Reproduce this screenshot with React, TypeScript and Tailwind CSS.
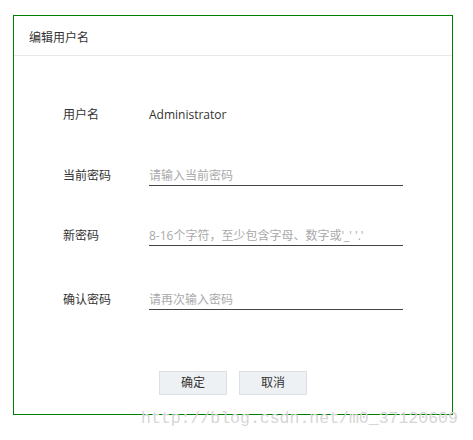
export default function App() {
  const rows = [
    { label: "当前密码", placeholder: "请输入当前密码", mt: "mt-[45px]" },
    { label: "新密码", placeholder: "8-16个字符，至少包含字母、数字或'_' '.'", mt: "mt-[42px]" },
    { label: "确认密码", placeholder: "请再次输入密码", mt: "mt-[46px]" },
  ];

  return (
    <div
      className="relative w-[473px] h-[440px] bg-white pt-[15px] pl-[13px] text-[12px] text-[#333]"
      style={{ fontFamily: '"Open Sans", "Noto Sans CJK SC", sans-serif' }}
    >
      <div className="w-[440px] h-[400px] border border-[#008000] flex flex-col">
        <div className="pl-[15px] pt-[14px] pb-[9px] leading-[16px] border-b border-[#e8e8e8]">
          编辑用户名
        </div>

        <div className="pl-[49px] flex flex-col">
          <div className="mt-[51px] flex leading-[16px]">
            <span className="w-[86px]">用户名</span>
            <span>Administrator</span>
          </div>

          {rows.map((r) => (
            <div key={r.label} className={`${r.mt} flex leading-[16px]`}>
              <span className="w-[86px]">{r.label}</span>
              <div className="w-[254px] pb-[1px] border-b border-[#444] text-[#aaa] whitespace-nowrap">
                {r.placeholder}
              </div>
            </div>
          ))}
        </div>

        <div className="mt-[61px] pl-[145px] flex gap-[12px]">
          <button className="w-[68px] h-[24px] bg-[#eef1f4] border border-[#dcdfe3] text-[#333]">
            确定
          </button>
          <button className="w-[68px] h-[24px] bg-[#eef1f4] border border-[#dcdfe3] text-[#333]">
            取消
          </button>
        </div>
      </div>

      <div
        className="absolute left-[141px] top-[409px] text-[16.5px] leading-[20px] text-[#d6d6d6] whitespace-nowrap"
        style={{ fontFamily: '"Liberation Mono", monospace' }}
      >
        http://blog.csdn.net/m0_37120609
      </div>
    </div>
  );
}
